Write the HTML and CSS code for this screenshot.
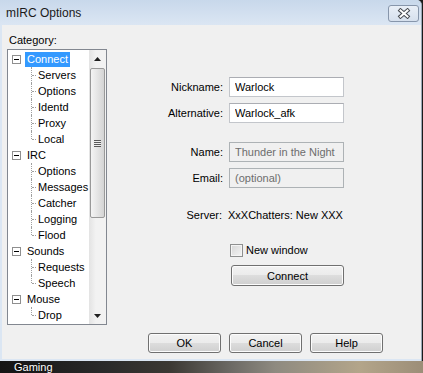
FILE: index.html
```html
<!DOCTYPE html>
<html lang="en">
<head>
    <meta charset="UTF-8">
    <meta name="viewport" content="width=device-width, initial-scale=1.0">
    <link rel="stylesheet" href="styles.css">
    <title>mIRC Options</title>
</head>
<body>
    <div class="window">
        <div class="titlebar">
            <span class="title">mIRC Options</span>
            <button class="close">
                <svg width="14" height="11" viewBox="0 0 14 11">
                    <path d="M3.5 2.5 L10.5 8.5 M10.5 2.5 L3.5 8.5" stroke="#44484e" stroke-width="4" stroke-linecap="square" fill="none"/>
                    <path d="M3.5 2.5 L10.5 8.5 M10.5 2.5 L3.5 8.5" stroke="#ffffff" stroke-width="2" stroke-linecap="square" fill="none"/>
                </svg>
            </button>
        </div>
        <div class="content">
            <div class="main">
                <div class="side">
                    <div class="caption">Category:</div>
                    <div class="tree">
                        <ul class="tree-list">
                            <li>
                                <div class="node"><span class="toggle"></span><span class="label selected">Connect</span></div>
                                <ul class="kids">
                                    <li><span class="label">Servers</span></li>
                                    <li><span class="label">Options</span></li>
                                    <li><span class="label">Identd</span></li>
                                    <li><span class="label">Proxy</span></li>
                                    <li><span class="label">Local</span></li>
                                </ul>
                            </li>
                            <li>
                                <div class="node"><span class="toggle"></span><span class="label">IRC</span></div>
                                <ul class="kids">
                                    <li><span class="label">Options</span></li>
                                    <li><span class="label">Messages</span></li>
                                    <li><span class="label">Catcher</span></li>
                                    <li><span class="label">Logging</span></li>
                                    <li><span class="label">Flood</span></li>
                                </ul>
                            </li>
                            <li>
                                <div class="node"><span class="toggle"></span><span class="label">Sounds</span></div>
                                <ul class="kids">
                                    <li><span class="label">Requests</span></li>
                                    <li><span class="label">Speech</span></li>
                                </ul>
                            </li>
                            <li>
                                <div class="node"><span class="toggle"></span><span class="label">Mouse</span></div>
                                <ul class="kids">
                                    <li><span class="label">Drop</span></li>
                                </ul>
                            </li>
                        </ul>
                        <div class="scrollbar">
                            <div class="arrow">
                                <svg width="7" height="4" viewBox="0 0 7 4"><polygon points="3.5,0 7,4 0,4" fill="#202020"/></svg>
                            </div>
                            <div class="track">
                                <div class="thumb"><span class="grip"></span></div>
                            </div>
                            <div class="arrow">
                                <svg width="7" height="4" viewBox="0 0 7 4"><polygon points="0,0 7,0 3.5,4" fill="#202020"/></svg>
                            </div>
                        </div>
                    </div>
                </div>

                <div class="pane">
                    <div class="group">
                        <div class="row">
                            <label>Nickname:</label>
                            <input type="text" class="field" value="Warlock">
                        </div>
                        <div class="row">
                            <label>Alternative:</label>
                            <input type="text" class="field" value="Warlock_afk">
                        </div>
                    </div>
                    <div class="group second">
                        <div class="row">
                            <label>Name:</label>
                            <input type="text" class="field" value="Thunder in the Night" disabled>
                        </div>
                        <div class="row">
                            <label>Email:</label>
                            <input type="text" class="field" value="(optional)" disabled>
                        </div>
                    </div>
                    <div class="row server">
                        <label>Server:</label>
                        <span>XxXChatters: New XXX</span>
                    </div>
                    <div class="row check-row">
                        <span></span>
                        <span class="check"><span class="box"></span>New window</span>
                    </div>
                    <div class="row connect-row">
                        <span></span>
                        <button class="btn connect">Connect</button>
                    </div>
                </div>
            </div>

            <div class="actions">
                <button class="btn">OK</button>
                <button class="btn">Cancel</button>
                <button class="btn">Help</button>
            </div>
        </div>
    </div>
    <div class="desktop"><span>Gaming</span></div>
</body>
</html>
```

FILE: styles.css
```css
* {
    box-sizing: border-box;
}

body {
    margin: 0;
    width: 423px;
    height: 373px;
    overflow: hidden;
    background-color: #1b1b1b;
    font-family: "Liberation Sans", Arial, sans-serif;
    font-size: 11px;
    color: #000;
}

.window {
    width: 422px;
    height: 361px;
    background-color: #dbe6f3;
    border-right: 1px solid #9aa8b8;
    border-top-right-radius: 5px;
    display: flex;
    flex-direction: column;
}

.titlebar {
    height: 25px;
    display: flex;
    align-items: center;
    justify-content: space-between;
    padding: 0 2px 0 6px;
    background: linear-gradient(#c8d8eb, #dbe6f3);
    border-top-right-radius: 5px;
}

.title {
    font-size: 12px;
    color: #1a1a1a;
    padding-top: 1px;
}

.close {
    width: 31px;
    height: 17px;
    padding: 0;
    margin-top: 1px;
    border: 1px solid #8796ab;
    border-radius: 3px;
    background: linear-gradient(#e9eff7, #d6e0ed);
    display: flex;
    align-items: center;
    justify-content: center;
}

.content {
    flex: 1;
    margin: 0 0 2px 2px;
    background-color: #f0f0f0;
    padding: 8px 0 0 5px;
}

.main {
    display: flex;
}

.side {
    width: 100px;
}

.caption {
    height: 14px;
    line-height: 14px;
    padding-left: 2px;
    margin-bottom: 2px;
}

.tree {
    height: 276px;
    border: 1px solid #828790;
    background-color: #fff;
    display: flex;
}

.tree-list {
    flex: 1;
    list-style: none;
    margin: 0;
    padding: 1px 0 0 0;
    overflow: hidden;
}

.tree-list li {
    list-style: none;
}

.node {
    height: 16px;
    display: flex;
    align-items: flex-end;
    padding-left: 4px;
}

.toggle {
    width: 9px;
    height: 9px;
    margin: 0 4px 3px 0;
    border: 1px solid #8f8f8f;
    background: linear-gradient(#000, #000) center / 5px 1px no-repeat, #fff;
}

.label {
    height: 15px;
    line-height: 15px;
    padding: 0 2px;
    white-space: nowrap;
}

.label.selected {
    background-color: #3399ff;
    color: #fff;
}

.kids {
    margin: 0;
    padding: 0 0 0 28px;
}

.kids li {
    position: relative;
    height: 16px;
    display: flex;
    align-items: flex-end;
}

.kids li::before {
    content: "";
    position: absolute;
    left: -5px;
    top: 0;
    bottom: 0;
    border-left: 1px dotted #a0a0a0;
}

.kids li:last-child::before {
    bottom: 8px;
}

.kids li::after {
    content: "";
    position: absolute;
    left: -4px;
    top: 8px;
    width: 4px;
    border-top: 1px dotted #a0a0a0;
}

.scrollbar {
    width: 17px;
    display: flex;
    flex-direction: column;
    background: linear-gradient(to right, #e3e3e3, #f2f2f2 40%, #f2f2f2);
}

.arrow {
    height: 17px;
    display: flex;
    align-items: center;
    justify-content: center;
}

.track {
    flex: 1;
    padding: 1px 0 0 1px;
}

.thumb {
    width: 15px;
    height: 150px;
    border: 1px solid #999;
    border-radius: 2px;
    background: linear-gradient(to right, #f4f4f4, #e6e6e6 45%, #d4d4d4);
    display: flex;
    align-items: center;
    justify-content: center;
}

.grip {
    width: 7px;
    height: 7px;
    background: repeating-linear-gradient(#5a5a5a 0 1px, #eeeeee 1px 2px);
}

.pane {
    margin-top: 44px;
    font-size: 11px;
}

.group {
    display: flex;
    flex-direction: column;
    gap: 6px;
}

.group.second {
    margin-top: 19px;
}

.row {
    display: grid;
    grid-template-columns: 116px 115px;
    column-gap: 6px;
    align-items: center;
}

.row label {
    text-align: right;
}

.field {
    width: 115px;
    height: 20px;
    margin: 0;
    padding: 0 5px;
    border: 1px solid #c3c6cb;
    border-top-color: #abadb3;
    background-color: #fff;
    font-family: "Liberation Sans", Arial, sans-serif;
    font-size: 11px;
    color: #000;
    outline: none;
}

.field:disabled {
    background-color: #f0f0f0;
    border-color: #adb2b5;
    color: #6d6d6d;
}

.server {
    margin-top: 20px;
    height: 14px;
    line-height: 14px;
}

.server label {
    padding-right: 1px;
}

.server span {
    margin-left: -1px;
}

.check-row {
    margin-top: 21px;
    height: 14px;
}

.check {
    display: flex;
    align-items: center;
    gap: 3px;
    padding-left: 1px;
    line-height: 14px;
}

.box {
    width: 13px;
    height: 13px;
    border: 1px solid #8e8f8f;
    background: linear-gradient(135deg, #d6d6d6, #f4f4f4);
    box-shadow: inset 0 0 0 1px #f4f4f4;
}

.connect-row {
    margin-top: 8px;
}

.btn {
    height: 21px;
    padding: 0;
    border: 1px solid #707070;
    border-radius: 3px;
    background: linear-gradient(#f2f2f2 0, #ebebeb 50%, #dddddd 50%, #cfcfcf 100%);
    box-shadow: inset 0 0 0 1px #fcfcfc;
    font-family: "Liberation Sans", Arial, sans-serif;
    font-size: 11px;
    color: #000;
}

.connect {
    width: 113px;
    margin-left: 2px;
}

.actions {
    display: flex;
    justify-content: flex-end;
    gap: 8px;
    margin-top: 8px;
    padding-right: 38px;
}

.actions .btn {
    width: 73px;
    height: 20px;
}

.desktop {
    height: 12px;
    padding-left: 14px;
    background: linear-gradient(to right, #141414 0, #2a2a2a 25%, #3b3833 40%, #6d6b66 55%, #8e8a80 65%, #b3a58a 85%, #9c8e78 100%);
    color: #fff;
    font-family: "Liberation Sans", Arial, sans-serif;
    font-size: 11px;
    line-height: 13px;
    text-shadow: 0 0 2px #000;
    overflow: hidden;
}
```
